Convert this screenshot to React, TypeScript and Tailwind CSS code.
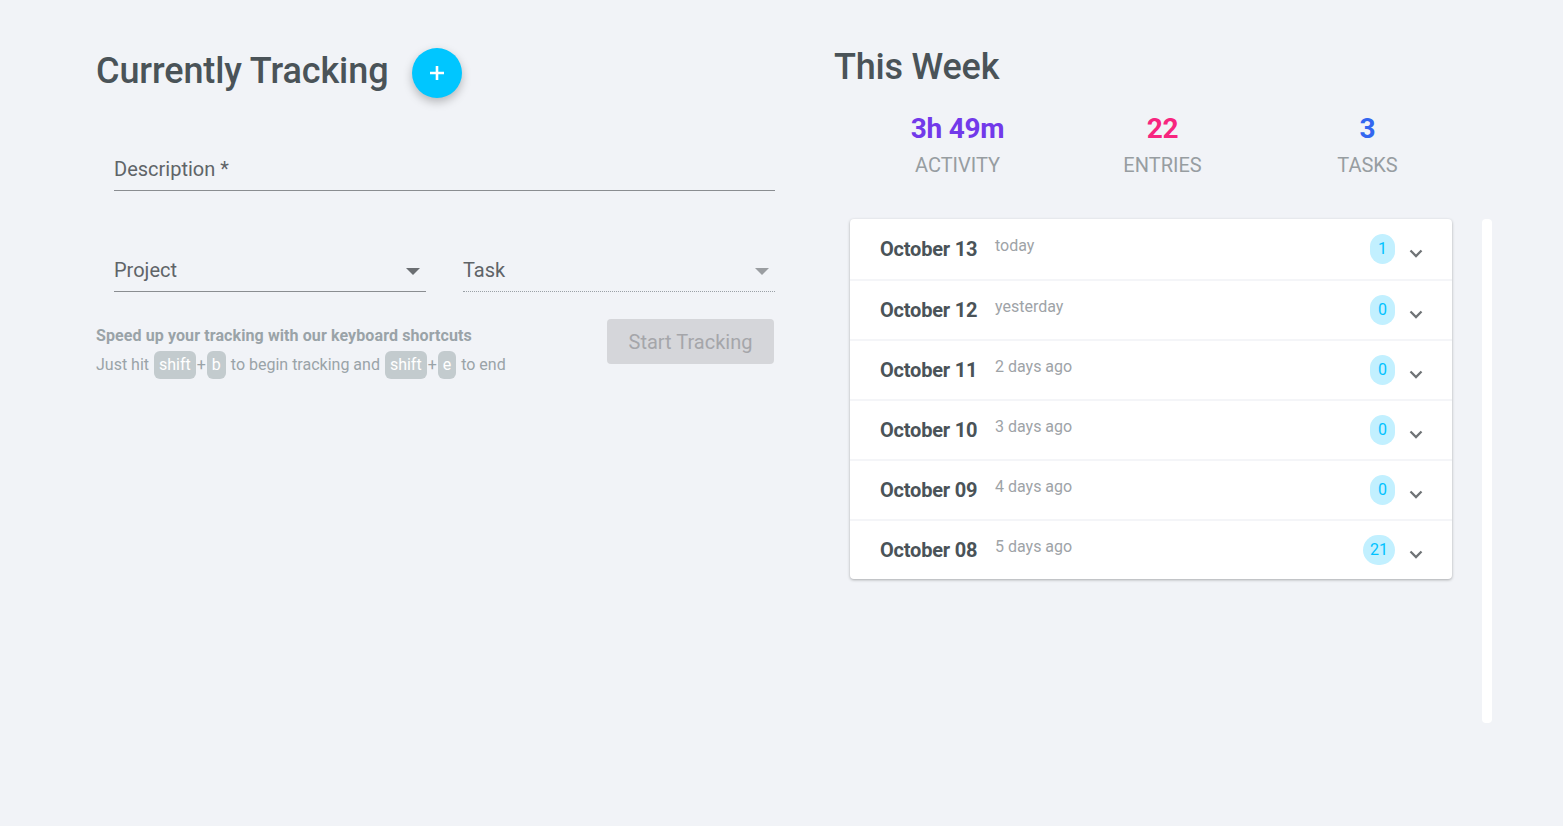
import React from 'react';

const days = [
    { date: 'October 13', rel: 'today', count: 1 },
    { date: 'October 12', rel: 'yesterday', count: 0 },
    { date: 'October 11', rel: '2 days ago', count: 0 },
    { date: 'October 10', rel: '3 days ago', count: 0 },
    { date: 'October 09', rel: '4 days ago', count: 0 },
    { date: 'October 08', rel: '5 days ago', count: 21 },
];

const stats = [
    { value: '3h 49m', label: 'ACTIVITY', color: 'text-[#7239ea]' },
    { value: '22', label: 'ENTRIES', color: 'text-[#f7257f]' },
    { value: '3', label: 'TASKS', color: 'text-[#3366f0]' },
];

function Key({ children }: { children: React.ReactNode }) {
    return (
        <span className="mx-[1px] inline-block rounded-md bg-[#c3cbce] px-[5px] leading-[28px] text-white">{children}</span>
    );
}

function SelectField({ label, dotted }: { label: string; dotted?: boolean }) {
    return (
        <div className={`flex flex-1 items-end justify-between pb-[6px] border-b ${dotted ? 'border-dotted border-[#9aa0a6]' : 'border-[#8a8d91]'}`}>
            <span className="text-[20px] text-[#5f6468]">{label}</span>
            <svg width="14" height="8" viewBox="0 0 14 8" className="mb-[9px] mr-[6px]">
                <path d="M0 0 L14 0 L7 7 Z" fill={dotted ? '#9a9da1' : '#6b6e72'} />
            </svg>
        </div>
    );
}

export default function App() {
    return (
        <div className="min-h-screen bg-[#f1f3f7] font-['Roboto',sans-serif]">
            <div className="flex pl-[96px] pt-[44px]">
                {/* Left column */}
                <div className="w-[679px] shrink-0">
                    <div className="flex items-center gap-[24px]">
                        <h1 className="text-[36px] font-medium leading-[46px] tracking-[-0.1px] text-[#4a5358]">Currently Tracking</h1>
                        <button className="mt-[4px] flex h-[50px] w-[50px] items-center justify-center rounded-full bg-[#00c6ff] shadow-[0_4px_10px_rgba(0,0,0,0.25)]">
                            <svg width="16" height="16" viewBox="0 0 16 16">
                                <path d="M8 1 V15 M1 8 H15" stroke="white" strokeWidth="2.6" />
                            </svg>
                        </button>
                    </div>

                    <div className="ml-[18px] mt-[56px] border-b border-[#8a8d91] pb-[6px]">
                        <span className="text-[20px] text-[#5f6468]">Description *</span>
                    </div>

                    <div className="ml-[18px] mt-[64px] flex gap-[37px]">
                        <SelectField label="Project" />
                        <SelectField label="Task" dotted />
                    </div>

                    <div className="mt-[33px] flex items-start justify-between">
                        <div className="text-[16px] text-[#9aa3a8]">
                            <p className="font-bold leading-[22px] tracking-[0.1px]">Speed up your tracking with our keyboard shortcuts</p>
                            <p className="mt-[4px] leading-[28px]">
                                Just hit <Key>shift</Key>+<Key>b</Key> to begin tracking and <Key>shift</Key>+<Key>e</Key> to end
                            </p>
                        </div>
                        <button className="mr-[1px] mt-[-6px] h-[45px] w-[167px] rounded-[4px] bg-[#d5d6da] text-[20px] text-[#a5a6aa]">Start Tracking</button>
                    </div>
                </div>

                {/* Right column */}
                <div className="ml-[59px] w-[658px]">
                    <h1 className="text-[36px] font-medium leading-[46px] tracking-[-0.2px] text-[#4a5358]">This Week</h1>
                    <div className="mt-[22px] flex w-[636px] pl-[21px]">
                        {stats.map((s) => (
                            <div key={s.label} className="flex flex-1 flex-col items-center">
                                <span className={`text-[28px] font-bold leading-[34px] tracking-[-0.3px] ${s.color}`}>{s.value}</span>
                                <span className="mt-[7px] text-[20px] leading-[24px] text-[#979da1]">{s.label}</span>
                            </div>
                        ))}
                    </div>

                    <div className="mt-[42px] flex">
                        <div className="ml-[16px] w-[602px] self-start overflow-hidden rounded-[4px] bg-white shadow-[0_1px_3px_rgba(0,0,0,0.3)]">
                            {days.map((d, i) => (
                                <div key={d.date} className={`flex h-[60px] items-center pl-[30px] pr-[29px] ${i > 0 ? 'border-t-2 border-[#f4f5f8]' : ''}`}>
                                    <span className="w-[115px] text-[20px] font-bold tracking-[-0.2px] text-[#4a5358]">{d.date}</span>
                                    <span className="mb-[6px] text-[16px] text-[#9ea3a7]">{d.rel}</span>
                                    <span className="ml-auto flex h-[30px] min-w-[25px] items-center justify-center rounded-full bg-[#c2f0ff] px-[7px] text-[16px] text-[#00c2ff]">{d.count}</span>
                                    <svg width="14" height="9" viewBox="0 0 14 9" className="ml-[14px] mt-[8px]">
                                        <path d="M1.5 1.5 L7 7 L12.5 1.5" fill="none" stroke="#6f7376" strokeWidth="2.3" />
                                    </svg>
                                </div>
                            ))}
                        </div>
                        <div className="ml-[30px] h-[504px] w-[10px] rounded-[4px] bg-white" />
                    </div>
                </div>
            </div>
        </div>
    );
}
